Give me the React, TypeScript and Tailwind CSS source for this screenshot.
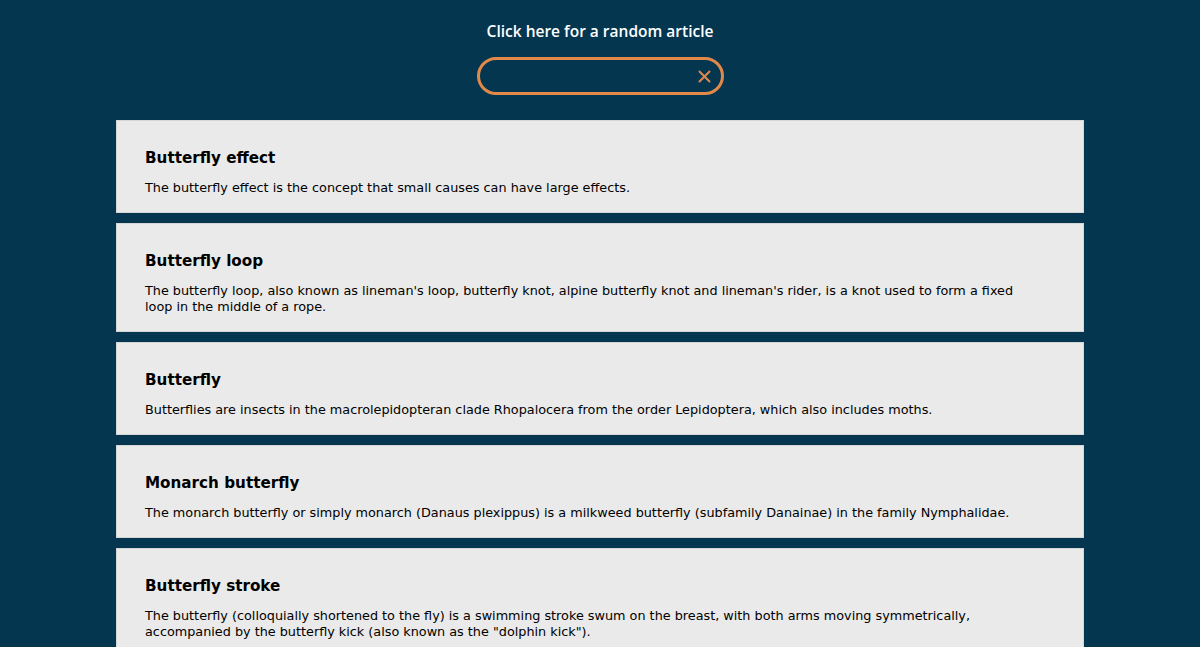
import React from "react";

const items = [
  { t: "Butterfly effect", d: "The butterfly effect is the concept that small causes can have large effects." },
  { t: "Butterfly loop", d: "The butterfly loop, also known as lineman's loop, butterfly knot, alpine butterfly knot and lineman's rider, is a knot used to form a fixed loop in the middle of a rope." },
  { t: "Butterfly", d: "Butterflies are insects in the macrolepidopteran clade Rhopalocera from the order Lepidoptera, which also includes moths." },
  { t: "Monarch butterfly", d: "The monarch butterfly or simply monarch (Danaus plexippus) is a milkweed butterfly (subfamily Danainae) in the family Nymphalidae." },
  { t: "Butterfly stroke", d: "The butterfly (colloquially shortened to the fly) is a swimming stroke swum on the breast, with both arms moving symmetrically, accompanied by the butterfly kick (also known as the \"dolphin kick\")." },
];

export default function App() {
  return (
    <div className="min-h-screen bg-[#04364f] font-['DejaVu_Sans',sans-serif] pb-6">
      <div className="flex flex-col items-center pt-[20px]">
        <a className="text-white font-semibold font-['Open_Sans',sans-serif] text-[15.5px] leading-[22px] cursor-pointer">Click here for a random article</a>
        <div className="mt-[15px] w-[247px] h-[38px] rounded-full border-[3px] border-[#e0894a] flex items-center justify-end pr-[10px]">
          <svg width="13" height="13" viewBox="0 0 13 13">
            <path d="M1.5 1.5 L11.5 11.5 M11.5 1.5 L1.5 11.5" stroke="#e0894a" strokeWidth="2" strokeLinecap="round" />
          </svg>
        </div>
      </div>
      <div className="mx-auto mt-[25px] w-[968px] flex flex-col gap-[10px]">
        {items.map((it) => (
          <div key={it.t} className="bg-[#eaeaea] border border-[#d6d6d6] pl-[28px] pr-[46px] pt-[26px] pb-[16px]">
            <h2 className="text-[15.2px] font-bold text-black leading-[22px]">{it.t}</h2>
            <p className="mt-[11px] text-[12.8px] leading-[16px] text-black">{it.d}</p>
          </div>
        ))}
      </div>
    </div>
  );
}
